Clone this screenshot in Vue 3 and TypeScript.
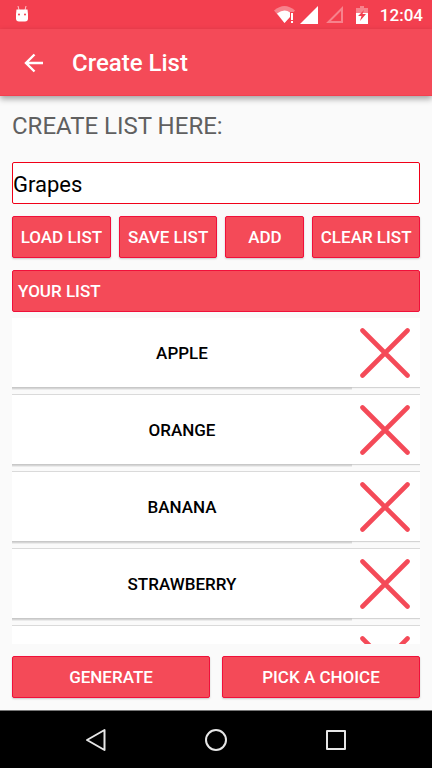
<script setup lang="ts">
import { ref } from 'vue'

const entry = ref('Grapes')
const items = ref<string[]>(['Apple', 'Orange', 'Banana', 'Strawberry', ''])

function addItem(): void {
  const name = entry.value.trim()
  if (name) items.value.push(name)
}

function removeItem(index: number): void {
  items.value.splice(index, 1)
}

function clearItems(): void {
  items.value = []
}
</script>

<template>
  <div class="screen">
    <div class="status">
      <svg class="bug" width="14" height="18" viewBox="0 0 14 18" aria-hidden="true">
        <path d="M3 1l1 4M11 1l-1 4" stroke="#fff" stroke-opacity=".7" fill="none" />
        <path d="M1.500 4.500h11l.5 4.500v4.500q0 3-3 3h-6q-3 0-3-3v-4.500z" fill="#fff" />
        <circle cx="4" cy="9.500" r="1" fill="#f33f4f" />
        <circle cx="10" cy="9.500" r="1" fill="#f33f4f" />
      </svg>
      <div class="indicators">
        <svg width="84" height="20" viewBox="0 0 84 20" aria-hidden="true">
          <path d="M0 5.500Q10.500-3.500 21 5.500L10.500 18z" fill="#fff" fill-opacity=".35" />
          <path d="M3 8.500Q10.500 3 16 7.500V12l-5.500 6z" fill="#fff" />
          <path d="M16 7h5v12h-5z" fill="#f33f4f" />
          <path d="M17 8h2v7h-2zM17 16h2v2h-2z" fill="#fff" />
          <path d="M44 1v18H26z" fill="#fff" />
          <path d="M68 3.500V17H54.500z" fill="none" stroke="#fff" stroke-opacity=".35" stroke-width="2" />
        </svg>
        <svg class="battery" width="12" height="18" viewBox="0 0 12 18" aria-hidden="true">
          <path d="M4 0h4v2h4v5H0V2h4z" fill="#fff" fill-opacity=".35" />
          <path d="M0 7h12v11H0z" fill="#fff" />
          <path d="M8 4l-6 6h3.500l-1.500 5 6-7H6.500z" fill="#f33f4f" />
        </svg>
        <span class="clock">12:04</span>
      </div>
    </div>

    <header class="appbar">
      <button class="back" type="button" aria-label="Back">
        <svg width="20" height="20" viewBox="0 0 20 20" aria-hidden="true">
          <path d="M19 10H2M10.500 1.500L2 10l8.500 8.500" fill="none" stroke="#fff" stroke-width="2.400" />
        </svg>
      </button>
      <h1>Create List</h1>
    </header>

    <main class="content">
      <label class="prompt" for="entry">CREATE LIST HERE:</label>
      <input id="entry" v-model="entry" class="entry" type="text" />

      <div class="actions">
        <button class="btn" type="button">LOAD LIST</button>
        <button class="btn" type="button">SAVE LIST</button>
        <button class="btn" type="button" @click="addItem">ADD</button>
        <button class="btn" type="button" @click="clearItems">CLEAR LIST</button>
      </div>

      <h2 class="list-title">YOUR LIST</h2>
      <ul class="list">
        <li v-for="(item, index) in items" :key="index" class="row">
          <button class="name" type="button">{{ item }}</button>
          <button class="remove" type="button" :aria-label="`Remove item ${index + 1}`" @click="removeItem(index)">
            <svg width="50" height="50" viewBox="0 0 50 50" aria-hidden="true">
              <path d="M2.500 2.500l45 45M47.500 2.500l-45 45" stroke="#f44a58" stroke-width="4.600" stroke-linecap="round" />
            </svg>
          </button>
        </li>
      </ul>

      <div class="choices">
        <button class="btn" type="button">GENERATE</button>
        <button class="btn" type="button">PICK A CHOICE</button>
      </div>
    </main>

    <nav class="navbar">
      <button type="button" aria-label="System back">
        <svg width="24" height="24" viewBox="0 0 24 24" aria-hidden="true">
          <path d="M20.500 2v20L3 12z" />
        </svg>
      </button>
      <button type="button" aria-label="Home">
        <svg width="24" height="24" viewBox="0 0 24 24" aria-hidden="true">
          <circle cx="12" cy="12" r="10" />
        </svg>
      </button>
      <button type="button" aria-label="Recent apps">
        <svg width="24" height="24" viewBox="0 0 24 24" aria-hidden="true">
          <path d="M3 3h18v18H3z" />
        </svg>
      </button>
    </nav>
  </div>
</template>

<style>
body {
  margin: 0;
  background: #fafafa;
}
</style>

<style scoped>
* {
  box-sizing: border-box;
}

.screen {
  display: flex;
  flex-direction: column;
  height: 100vh;
  background: #fafafa;
  font-family: Roboto, sans-serif;
}

button {
  margin: 0;
  padding: 0;
  border: 0;
  background: none;
  font-family: inherit;
}

svg {
  display: block;
}

.status {
  display: flex;
  flex: none;
  align-items: center;
  justify-content: space-between;
  height: 29px;
  padding: 0 9px 0 15px;
  background: #f33f4f;
  color: #fff;
}

.bug {
  margin-bottom: 2px;
}

.indicators {
  display: flex;
  align-items: center;
}

.battery {
  margin-left: -2px;
}

.clock {
  margin-left: 12px;
  font-size: 17px;
  font-weight: 500;
  line-height: 28px;
}

.appbar {
  position: relative;
  display: flex;
  flex: none;
  align-items: center;
  height: 67px;
  padding: 2px 24px 0;
  border-bottom: 1px solid #f33f4f;
  background: #f44a58;
  box-shadow: 0 3px 6px rgba(0, 0, 0, 0.35);
}

h1 {
  margin: 0 0 0 28px;
  color: #fff;
  font-size: 24px;
  font-weight: 500;
  line-height: 32px;
}

.content {
  display: flex;
  flex: 1;
  flex-direction: column;
  min-height: 0;
  padding: 12px;
}

.prompt {
  margin: 2px 0 20px;
  color: #606060;
  font-size: 24px;
  line-height: 32px;
}

.entry {
  flex: none;
  width: 100%;
  height: 42px;
  padding: 2px 0 0;
  border: 1px solid #f00018;
  border-radius: 2px;
  outline: 0;
  background: #fff;
  color: #000;
  font-family: inherit;
  font-size: 22px;
}

.actions {
  display: grid;
  grid-template-columns: 99fr 99fr 79fr 108fr;
  gap: 8px;
  margin: 12px 0;
}

.btn,
.list-title {
  height: 42px;
  border: 1px solid #f0103a;
  border-radius: 2px;
  background: #f44a58;
  color: #fff;
  font-size: 17px;
  font-weight: 500;
  line-height: 40px;
  white-space: nowrap;
}

.btn {
  box-shadow: 0 1px 2px rgba(0, 0, 0, 0.2);
}

.list-title {
  flex: none;
  margin: 0 0 6px;
  padding: 0 5px;
}

.list {
  display: flex;
  flex: 1;
  flex-direction: column;
  gap: 8px;
  min-height: 0;
  margin: 0;
  padding: 0;
  overflow: hidden;
  list-style: none;
}

.row {
  display: flex;
  flex: none;
  height: 69px;
  background: #fff;
  box-shadow: 0 -1px 0 #dadada, 0 1px 1px #d4d4d4;
}

.name {
  flex: 1;
  box-shadow: 0 1px 0 #c8c8c8, 0 2px 0 #d6d6d6, 0 3px 0 #ebebeb;
  color: #000;
  font-size: 17px;
  font-weight: 500;
  text-transform: uppercase;
}

.remove {
  padding: 0 10px 0 8px;
}

.choices {
  display: grid;
  grid-template-columns: 1fr 1fr;
  gap: 12px;
  margin-top: 12px;
}

.navbar {
  display: flex;
  flex: none;
  justify-content: center;
  gap: 96px;
  height: 58px;
  border-top: 1px solid #777;
  background: #000;
}

.navbar svg {
  fill: none;
  stroke: #e6e6e6;
  stroke-width: 2;
  stroke-linejoin: round;
}
</style>
